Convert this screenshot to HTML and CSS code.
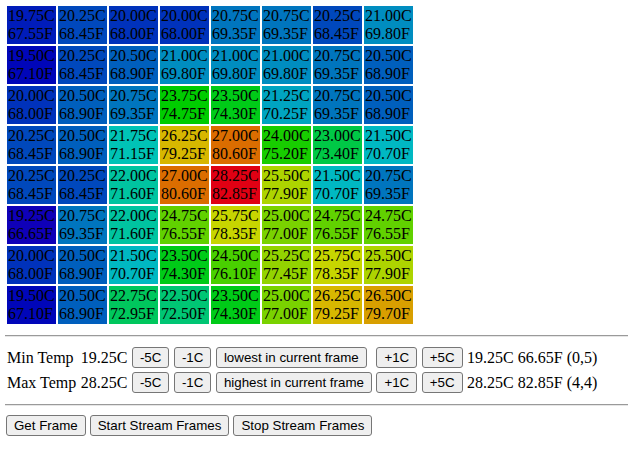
FILE: index.html
```html
<!DOCTYPE html>
<html>
<head>
<meta charset="utf-8">
<link rel="stylesheet" href="styles.css">
</head>
<body>
<div class="frame">
<div class="cell" style="background:hsl(231,100%,36.4%)">19.75C<br>67.55F</div>
<div class="cell" style="background:hsl(217,100%,36.9%)">20.25C<br>68.45F</div>
<div class="cell" style="background:hsl(224,100%,36.7%)">20.00C<br>68.00F</div>
<div class="cell" style="background:hsl(224,100%,36.7%)">20.00C<br>68.00F</div>
<div class="cell" style="background:hsl(203,100%,37.3%)">20.75C<br>69.35F</div>
<div class="cell" style="background:hsl(203,100%,37.3%)">20.75C<br>69.35F</div>
<div class="cell" style="background:hsl(217,100%,36.9%)">20.25C<br>68.45F</div>
<div class="cell" style="background:hsl(196,100%,37.6%)">21.00C<br>69.80F</div>

<div class="cell" style="background:hsl(238,100%,36.2%)">19.50C<br>67.10F</div>
<div class="cell" style="background:hsl(217,100%,36.9%)">20.25C<br>68.45F</div>
<div class="cell" style="background:hsl(210,100%,37.1%)">20.50C<br>68.90F</div>
<div class="cell" style="background:hsl(196,100%,37.6%)">21.00C<br>69.80F</div>
<div class="cell" style="background:hsl(196,100%,37.6%)">21.00C<br>69.80F</div>
<div class="cell" style="background:hsl(196,100%,37.6%)">21.00C<br>69.80F</div>
<div class="cell" style="background:hsl(203,100%,37.3%)">20.75C<br>69.35F</div>
<div class="cell" style="background:hsl(210,100%,37.1%)">20.50C<br>68.90F</div>

<div class="cell" style="background:hsl(224,100%,36.7%)">20.00C<br>68.00F</div>
<div class="cell" style="background:hsl(210,100%,37.1%)">20.50C<br>68.90F</div>
<div class="cell" style="background:hsl(203,100%,37.3%)">20.75C<br>69.35F</div>
<div class="cell" style="background:hsl(120,100%,40%)">23.75C<br>74.75F</div>
<div class="cell" style="background:hsl(127,100%,39.8%)">23.50C<br>74.30F</div>
<div class="cell" style="background:hsl(189,100%,37.8%)">21.25C<br>70.25F</div>
<div class="cell" style="background:hsl(203,100%,37.3%)">20.75C<br>69.35F</div>
<div class="cell" style="background:hsl(210,100%,37.1%)">20.50C<br>68.90F</div>

<div class="cell" style="background:hsl(217,100%,36.9%)">20.25C<br>68.45F</div>
<div class="cell" style="background:hsl(210,100%,37.1%)">20.50C<br>68.90F</div>
<div class="cell" style="background:hsl(176,100%,38.2%)">21.75C<br>71.15F</div>
<div class="cell" style="background:hsl(51,100%,42.2%)">26.25C<br>79.25F</div>
<div class="cell" style="background:hsl(30,100%,42.9%)">27.00C<br>80.60F</div>
<div class="cell" style="background:hsl(113,100%,40.2%)">24.00C<br>75.20F</div>
<div class="cell" style="background:hsl(141,100%,39.3%)">23.00C<br>73.40F</div>
<div class="cell" style="background:hsl(183,100%,38%)">21.50C<br>70.70F</div>

<div class="cell" style="background:hsl(217,100%,36.9%)">20.25C<br>68.45F</div>
<div class="cell" style="background:hsl(217,100%,36.9%)">20.25C<br>68.45F</div>
<div class="cell" style="background:hsl(169,100%,38.4%)">22.00C<br>71.60F</div>
<div class="cell" style="background:hsl(30,100%,42.9%)">27.00C<br>80.60F</div>
<div class="cell" style="background:hsl(355,100%,44%)">28.25C<br>82.85F</div>
<div class="cell" style="background:hsl(71,100%,41.6%)">25.50C<br>77.90F</div>
<div class="cell" style="background:hsl(183,100%,38%)">21.50C<br>70.70F</div>
<div class="cell" style="background:hsl(203,100%,37.3%)">20.75C<br>69.35F</div>

<div class="cell" style="background:hsl(245,100%,36%)">19.25C<br>66.65F</div>
<div class="cell" style="background:hsl(203,100%,37.3%)">20.75C<br>69.35F</div>
<div class="cell" style="background:hsl(169,100%,38.4%)">22.00C<br>71.60F</div>
<div class="cell" style="background:hsl(92,100%,40.9%)">24.75C<br>76.55F</div>
<div class="cell" style="background:hsl(64,100%,41.8%)">25.75C<br>78.35F</div>
<div class="cell" style="background:hsl(85,100%,41.1%)">25.00C<br>77.00F</div>
<div class="cell" style="background:hsl(92,100%,40.9%)">24.75C<br>76.55F</div>
<div class="cell" style="background:hsl(92,100%,40.9%)">24.75C<br>76.55F</div>

<div class="cell" style="background:hsl(224,100%,36.7%)">20.00C<br>68.00F</div>
<div class="cell" style="background:hsl(210,100%,37.1%)">20.50C<br>68.90F</div>
<div class="cell" style="background:hsl(183,100%,38%)">21.50C<br>70.70F</div>
<div class="cell" style="background:hsl(127,100%,39.8%)">23.50C<br>74.30F</div>
<div class="cell" style="background:hsl(99,100%,40.7%)">24.50C<br>76.10F</div>
<div class="cell" style="background:hsl(78,100%,41.3%)">25.25C<br>77.45F</div>
<div class="cell" style="background:hsl(64,100%,41.8%)">25.75C<br>78.35F</div>
<div class="cell" style="background:hsl(71,100%,41.6%)">25.50C<br>77.90F</div>

<div class="cell" style="background:hsl(238,100%,36.2%)">19.50C<br>67.10F</div>
<div class="cell" style="background:hsl(210,100%,37.1%)">20.50C<br>68.90F</div>
<div class="cell" style="background:hsl(148,100%,39.1%)">22.75C<br>72.95F</div>
<div class="cell" style="background:hsl(155,100%,38.9%)">22.50C<br>72.50F</div>
<div class="cell" style="background:hsl(127,100%,39.8%)">23.50C<br>74.30F</div>
<div class="cell" style="background:hsl(85,100%,41.1%)">25.00C<br>77.00F</div>
<div class="cell" style="background:hsl(51,100%,42.2%)">26.25C<br>79.25F</div>
<div class="cell" style="background:hsl(44,100%,42.4%)">26.50C<br>79.70F</div>
</div>

<hr class="rule rule-top">

<div class="controls">
  <span>Min Temp</span>
  <span>19.25C</span>
  <button class="btn">-5C</button>
  <button class="btn">-1C</button>
  <span><button class="btn">lowest in current frame</button></span>
  <button class="btn">+1C</button>
  <button class="btn">+5C</button>
  <span>19.25C 66.65F (0,5)</span>

  <span>Max Temp</span>
  <span>28.25C</span>
  <button class="btn">-5C</button>
  <button class="btn">-1C</button>
  <span><button class="btn">highest in current frame</button></span>
  <button class="btn">+1C</button>
  <button class="btn">+5C</button>
  <span>28.25C 82.85F (4,4)</span>
</div>

<hr class="rule rule-bottom">

<div class="actions">
  <button class="btn">Get Frame</button>
  <button class="btn">Start Stream Frames</button>
  <button class="btn">Stop Stream Frames</button>
</div>
</body>
</html>
```

FILE: styles.css
```css
html, body {
  margin: 0;
  padding: 0;
  background: #fff;
}

body {
  font-family: "Liberation Serif", "Times New Roman", serif;
  font-size: 16px;
  color: #000;
  width: 628px;
  overflow: hidden;
}

.frame {
  display: grid;
  grid-template-columns: repeat(8, 49px);
  grid-auto-rows: 38px;
  gap: 2px;
  margin: 6px 0 0 7px;
}

.cell {
  padding: 1px;
  line-height: 18px;
  white-space: nowrap;
  overflow: hidden;
}

.rule {
  height: 0;
  border: 0;
  border-top: 1px solid #9a9a9a;
  border-bottom: 1px solid #e6e6e6;
  margin-left: 5px;
  margin-right: 0;
}

.rule-top {
  margin-top: 11px;
  margin-bottom: 0;
}

.rule-bottom {
  margin-top: 11px;
  margin-bottom: 0;
}

.controls {
  display: grid;
  grid-template-columns: repeat(8, auto);
  justify-content: start;
  justify-items: start;
  align-items: center;
  column-gap: 4.5px;
  row-gap: 4px;
  margin: 10px 0 0 7px;
  line-height: 18px;
}

.btn {
  font-family: "Liberation Sans", Arial, sans-serif;
  font-size: 13.333px;
  line-height: 15px;
  color: #000;
  background: #efefef;
  border: 1px solid #767676;
  border-radius: 3px;
  padding: 2px 7px;
  margin: 0;
  white-space: nowrap;
}

.controls span {
  display: block;
}

.actions {
  display: flex;
  gap: 4px;
  margin: 9px 0 0 6px;
}
```
